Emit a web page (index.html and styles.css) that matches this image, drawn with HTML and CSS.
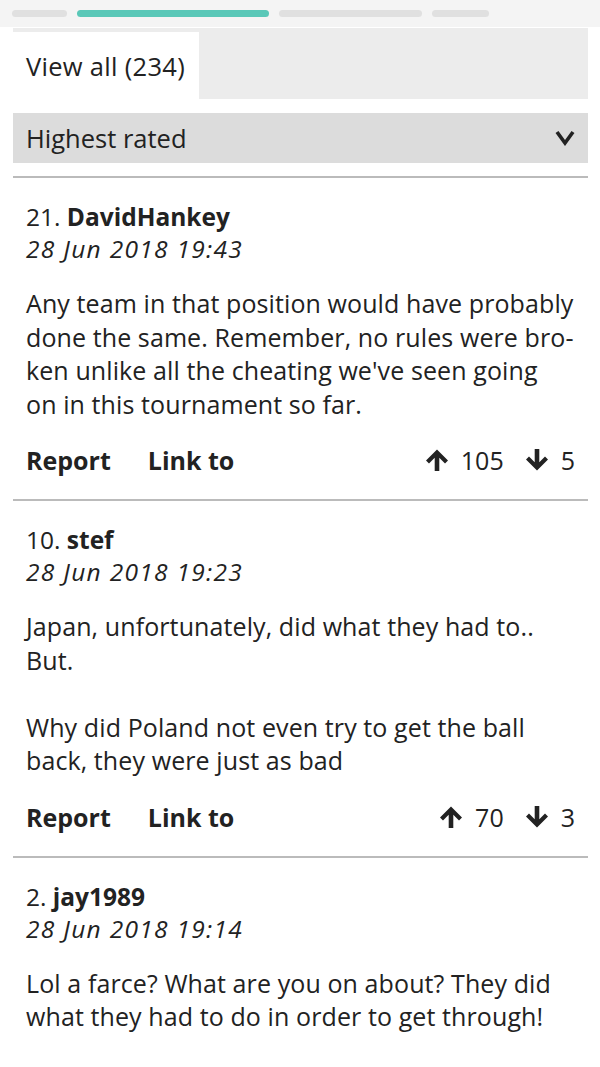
FILE: index.html
```html
<!DOCTYPE html>
<html lang="en">
<head>
    <meta charset="UTF-8">
    <meta name="viewport" content="width=device-width, initial-scale=1.0">
    <title>Comments</title>
    <link rel="stylesheet" href="styles.css">
</head>
<body>
    <!-- progress pills at the top -->
    <div class="topbar">
        <span class="pill pill-a"></span>
        <span class="pill pill-b active"></span>
        <span class="pill pill-c"></span>
        <span class="pill pill-d"></span>
    </div>

    <div class="page">
        <div class="tabs">
            <div class="tab current">View all (234)</div>
        </div>

        <div class="sort">
            <span>Highest rated</span>
            <svg class="chevron" width="20" height="16" viewBox="0 0 20 16">
                <polyline points="2,2 10,13 18,2" fill="none" stroke="#222" stroke-width="3.6" stroke-linejoin="miter"/>
            </svg>
        </div>

        <div class="comment">
            <div class="author">21. <b>DavidHankey</b></div>
            <div class="date">28 Jun 2018 19:43</div>
            <p class="body">Any team in that position would have probably done the same. Remember, no rules were bro&shy;ken unlike all the cheating we've seen going<br>on in this tournament so far.</p>
            <div class="actions">
                <span class="link">Report</span>
                <span class="link">Link to</span>
                <span class="votes">
                    <svg class="arrow" width="24" height="24" viewBox="0 0 24 24"><path d="M12 1.5 L23 12.5 L20 15.5 L14.3 9.8 L14.3 23 L9.7 23 L9.7 9.8 L4 15.5 L1 12.5 Z" fill="#222"/></svg>
                    <span class="count">105</span>
                    <svg class="arrow" width="24" height="24" viewBox="0 0 24 24"><path d="M12 22.5 L23 11.5 L20 8.5 L14.3 14.2 L14.3 1 L9.7 1 L9.7 14.2 L4 8.5 L1 11.5 Z" fill="#222"/></svg>
                    <span class="count">5</span>
                </span>
            </div>
        </div>

        <div class="comment">
            <div class="author">10. <b>stef</b></div>
            <div class="date">28 Jun 2018 19:23</div>
            <p class="body">Japan, unfortunately, did what they had to..<br>But.<br><br>Why did Poland not even try to get the ball back, they were just as bad</p>
            <div class="actions">
                <span class="link">Report</span>
                <span class="link">Link to</span>
                <span class="votes">
                    <svg class="arrow" width="24" height="24" viewBox="0 0 24 24"><path d="M12 1.5 L23 12.5 L20 15.5 L14.3 9.8 L14.3 23 L9.7 23 L9.7 9.8 L4 15.5 L1 12.5 Z" fill="#222"/></svg>
                    <span class="count">70</span>
                    <svg class="arrow" width="24" height="24" viewBox="0 0 24 24"><path d="M12 22.5 L23 11.5 L20 8.5 L14.3 14.2 L14.3 1 L9.7 1 L9.7 14.2 L4 8.5 L1 11.5 Z" fill="#222"/></svg>
                    <span class="count">3</span>
                </span>
            </div>
        </div>

        <div class="comment">
            <div class="author">2. <b>jay1989</b></div>
            <div class="date">28 Jun 2018 19:14</div>
            <p class="body">Lol a farce? What are you on about? They did what they had to do in order to get through!</p>
        </div>
    </div>
</body>
</html>
```

FILE: styles.css
```css
body {
    margin: 0;
    background: #fff;
    color: #222;
    font-family: "Open Sans", "Noto Sans", sans-serif;
}

.topbar {
    height: 27px;
    background: #f4f4f4;
    display: flex;
    align-items: center;
    gap: 10px;
    padding-left: 12px;
    box-sizing: border-box;
}
.pill {
    height: 7px;
    border-radius: 4px;
    background: #e0e0e0;
}
.pill-a { width: 55px; }
.pill-b { width: 192px; }
.pill-c { width: 143px; }
.pill-d { width: 57px; }
.pill.active { background: #5ac8b8; }

.page {
    padding: 0 12px 0 13px;
}

.tabs {
    background: #ececec;
    padding-top: 4px;
    height: 67px;
    margin-top: 1px;
    display: flex;
}
.tab {
    background: #fff;
    width: 186px;
    box-sizing: border-box;
    padding-left: 13px;
    display: flex;
    align-items: center;
    font-size: 25.5px;
    letter-spacing: 0.3px;
}

.sort {
    margin-top: 14px;
    height: 50px;
    background: #dcdcdc;
    display: flex;
    align-items: center;
    justify-content: space-between;
    padding: 0 13px;
    font-size: 25.5px;
}

.comment {
    border-top: 2px solid #bbb;
    margin-top: 13px;
    padding: 23px 13px 0;
}
.comment + .comment {
    margin-top: 0;
}
.author {
    font-size: 24.5px;
    line-height: 32px;
}
.date {
    font-size: 24.5px;
    line-height: 32px;
    font-style: italic;
    letter-spacing: 1.3px;
}
.body {
    margin: 22px 0 0;
    font-size: 25px;
    letter-spacing: 0.1px;
    line-height: 33.5px;
}

.actions {
    display: flex;
    align-items: center;
    height: 34px;
    margin-top: 22px;
    margin-bottom: 22px;
    font-size: 25px;
}
.link {
    font-weight: bold;
    margin-right: 37px;
}
.votes {
    margin-left: auto;
    display: flex;
    align-items: center;
}
.arrow {
    margin-right: 12px;
}
.count {
    margin-right: 21px;
}
.count:last-child {
    margin-right: 0;
}
```
